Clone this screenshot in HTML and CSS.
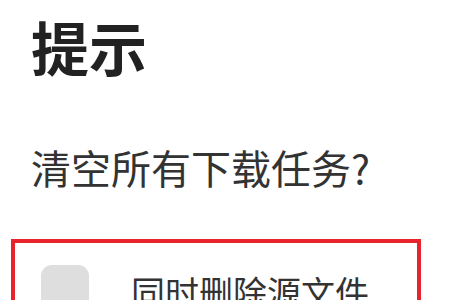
FILE: index.html
```html
<!DOCTYPE html>
<html lang="zh-CN">
<head>
<meta charset="utf-8">
<link rel="stylesheet" href="styles.css">
</head>
<body>
<div class="dialog">
  <h1 class="title">提示</h1>
  <p class="message">清空所有下载任务?</p>
  <div class="highlight">
    <label class="option">
      <span class="checkbox"></span>
      <span class="option-text">同时删除源文件</span>
    </label>
  </div>
</div>
</body>
</html>
```
FILE: styles.css
```css
html, body {
  margin: 0;
  padding: 0;
  background: #ffffff;
}
body {
  width: 450px;
  height: 300px;
  overflow: hidden;
  font-family: "Noto Sans CJK SC", "Noto Sans", sans-serif;
  color: #222222;
}
.dialog {
  display: flex;
  flex-direction: column;
  padding-top: 17px;
}
.title {
  margin: 0 0 0 31px;
  font-size: 58px;
  font-weight: 700;
  line-height: 1;
  color: #222222;
}
.message {
  margin: 72px 0 0 31px;
  font-size: 40px;
  font-weight: 400;
  line-height: 1;
  color: #333333;
}
.highlight {
  margin: 52px 0 0 11px;
  width: 402px;
  height: 100px;
  border: 4px solid #e8232b;
  box-sizing: content-box;
}
.option {
  display: flex;
  align-items: flex-start;
  padding: 22px 0 0 26px;
}
.checkbox {
  width: 48px;
  height: 48px;
  border-radius: 11px;
  background: #dedede;
  flex: none;
}
.option-text {
  margin-left: 42px;
  margin-top: 10px;
  font-size: 34px;
  line-height: 1;
  color: #333333;
}
```
